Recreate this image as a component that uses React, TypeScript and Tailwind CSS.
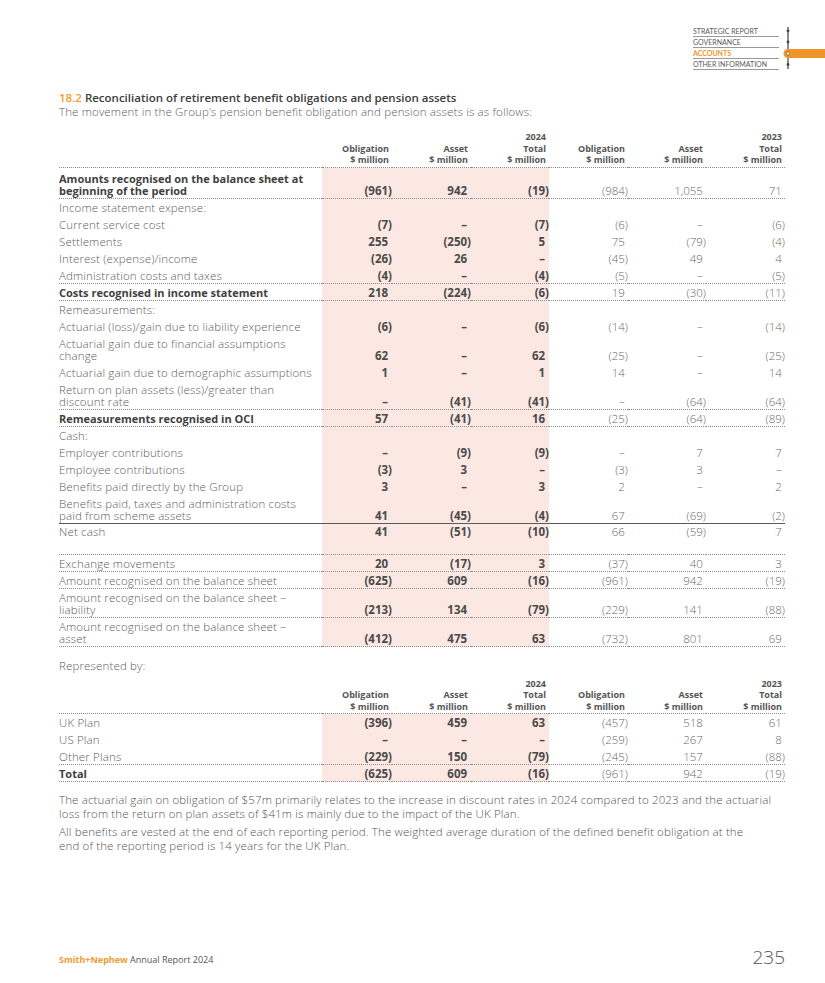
import React from "react";

const GRID = "grid grid-cols-[263px_70px_79px_78px_79px_78px_79px]";
const PINK = "bg-[#fce8e3]";

type Row = {
  label: string[];
  vals?: string[];
  bold?: boolean;
  border?: "dotted" | "solid";
  pt?: string;
  spacer?: string;
};

const table1: Row[] = [
  { label: ["Amounts recognised on the balance sheet at", "beginning of the period"], vals: ["(961)", "942", "(19)", "(984)", "1,055", "71"], bold: true, border: "dotted", pt: "pt-[5px]" },
  { label: ["Income statement expense:"] },
  { label: ["Current service cost"], vals: ["(7)", "–", "(7)", "(6)", "–", "(6)"] },
  { label: ["Settlements"], vals: ["255", "(250)", "5", "75", "(79)", "(4)"] },
  { label: ["Interest (expense)/income"], vals: ["(26)", "26", "–", "(45)", "49", "4"] },
  { label: ["Administration costs and taxes"], vals: ["(4)", "–", "(4)", "(5)", "–", "(5)"], border: "dotted" },
  { label: ["Costs recognised in income statement"], vals: ["218", "(224)", "(6)", "19", "(30)", "(11)"], bold: true, border: "dotted" },
  { label: ["Remeasurements:"] },
  { label: ["Actuarial (loss)/gain due to liability experience"], vals: ["(6)", "–", "(6)", "(14)", "–", "(14)"] },
  { label: ["Actuarial gain due to financial assumptions", "change"], vals: ["62", "–", "62", "(25)", "–", "(25)"] },
  { label: ["Actuarial gain due to demographic assumptions"], vals: ["1", "–", "1", "14", "–", "14"] },
  { label: ["Return on plan assets (less)/greater than", "discount rate"], vals: ["–", "(41)", "(41)", "–", "(64)", "(64)"], border: "dotted" },
  { label: ["Remeasurements recognised in OCI"], vals: ["57", "(41)", "16", "(25)", "(64)", "(89)"], bold: true, border: "dotted" },
  { label: ["Cash:"] },
  { label: ["Employer contributions"], vals: ["–", "(9)", "(9)", "–", "7", "7"] },
  { label: ["Employee contributions"], vals: ["(3)", "3", "–", "(3)", "3", "–"] },
  { label: ["Benefits paid directly by the Group"], vals: ["3", "–", "3", "2", "–", "2"] },
  { label: ["Benefits paid, taxes and administration costs", "paid from scheme assets"], vals: ["41", "(45)", "(4)", "67", "(69)", "(2)"], border: "solid" },
  { label: ["Net cash"], vals: ["41", "(51)", "(10)", "66", "(59)", "7"], pt: "pt-[2px]" },
  { label: [], spacer: "h-[15px]", border: "dotted" },
  { label: ["Exchange movements"], vals: ["20", "(17)", "3", "(37)", "40", "3"], border: "dotted" },
  { label: ["Amount recognised on the balance sheet"], vals: ["(625)", "609", "(16)", "(961)", "942", "(19)"], border: "dotted" },
  { label: ["Amount recognised on the balance sheet –", "liability"], vals: ["(213)", "134", "(79)", "(229)", "141", "(88)"], border: "dotted" },
  { label: ["Amount recognised on the balance sheet –", "asset"], vals: ["(412)", "475", "63", "(732)", "801", "69"], border: "dotted" },
];

const table2: Row[] = [
  { label: ["UK Plan"], vals: ["(396)", "459", "63", "(457)", "518", "61"], pt: "pt-[3px]" },
  { label: ["US Plan"], vals: ["–", "–", "–", "(259)", "267", "8"] },
  { label: ["Other Plans"], vals: ["(229)", "150", "(79)", "(245)", "157", "(88)"], border: "dotted" },
  { label: ["Total"], vals: ["(625)", "609", "(16)", "(961)", "942", "(19)"], bold: true, border: "dotted" },
];

function Num({ v }: { v: string }) {
  const paren = v.endsWith(")");
  return (
    <span className="whitespace-nowrap">
      {v}
      {!paren && <span className="invisible">)</span>}
    </span>
  );
}

function borderCls(b?: "dotted" | "solid") {
  if (b === "dotted") return "border-b border-dotted border-[#8c8c8c] pb-[1px]";
  if (b === "solid") return "border-b border-solid border-[#5a5a5a] pb-[1px]";
  return "pb-[2px]";
}

function TableRow({ row }: { row: Row }) {
  const b = borderCls(row.border);
  const pt = row.pt ?? "pt-[3px]";
  if (row.spacer) {
    return (
      <>
        <div className={`${row.spacer} border-b border-dotted border-[#8c8c8c]`} />
        {[0, 1, 2, 3, 4, 5].map((i) => (
          <div key={i} className={`${row.spacer} border-b border-dotted border-[#8c8c8c] ${i < 3 ? PINK : ""}`} />
        ))}
      </>
    );
  }
  const vals = row.vals ?? ["", "", "", "", "", ""];
  return (
    <>
      <div
        className={`${b} ${pt} flex flex-col justify-end ${
          row.bold ? "font-bold text-[11px] text-[#3f3f3f]" : "font-light text-[#5e5e5e] tracking-[0.15px]"
        }`}
      >
        <div className="whitespace-nowrap">
          {row.label.map((l, i) => (
            <React.Fragment key={i}>
              {i > 0 && <br />}
              {l}
            </React.Fragment>
          ))}
        </div>
      </div>
      {vals.map((v, i) => (
        <div
          key={i}
          className={`${b} ${pt} flex items-end justify-end ${
            i < 3 ? `${PINK} font-bold text-[#4a4a4a]` : "font-light text-[#6a6a6a]"
          }`}
        >
          {v && <Num v={v} />}
        </div>
      ))}
    </>
  );
}

function Header() {
  const cols = [
    ["", "Obligation", "$ million"],
    ["", "Asset", "$ million"],
    ["2024", "Total", "$ million"],
    ["", "Obligation", "$ million"],
    ["", "Asset", "$ million"],
    ["2023", "Total", "$ million"],
  ];
  return (
    <>
      <div className="border-b border-dotted border-[#8c8c8c]" />
      {cols.map((c, i) => (
        <div
          key={i}
          className="border-b border-dotted border-[#8c8c8c] pb-[1px] flex flex-col items-end text-[9px] leading-[11.5px] font-bold text-[#555] pr-[3px]"
        >
          <div className="h-[11.5px]">{c[0]}</div>
          <div>{c[1]}</div>
          <div>{c[2]}</div>
        </div>
      ))}
    </>
  );
}

function Nav() {
  const items = ["STRATEGIC REPORT", "GOVERNANCE", "ACCOUNTS", "OTHER INFORMATION"];
  return (
    <div className="flex justify-end pt-[26px]" style={{ fontFamily: "Lato, 'Liberation Sans', sans-serif" }}>
      <div className="flex flex-col w-[86px]">
        {items.map((it) => (
          <div
            key={it}
            className={`h-[11px] border-b border-[#9a9a9a] text-[7px] leading-[10px] whitespace-nowrap ${
              it === "ACCOUNTS" ? "text-[#f0952a] font-bold" : "text-[#5a5a5a]"
            }`}
          >
            {it}
          </div>
        ))}
      </div>
      <svg width="46" height="46" viewBox="0 0 46 46" className="-mt-[2px]">
        <line x1="9" y1="3" x2="9" y2="45" stroke="#444" strokeWidth="1.2" />
        <rect x="9" y="25" width="37" height="9" fill="#f0952a" />
        <circle cx="9" cy="29.5" r="4.5" fill="#f0952a" />
        <circle cx="9" cy="7" r="1.4" fill="#444" />
        <circle cx="9" cy="18" r="1.4" fill="#444" />
        <circle cx="9" cy="29.5" r="1.6" fill="#fff" stroke="#444" strokeWidth="0.6" />
        <circle cx="9" cy="40.5" r="1.4" fill="#444" />
      </svg>
    </div>
  );
}

export default function App() {
  return (
    <div
      className="w-[825px] h-[983px] bg-white flex flex-col"
      style={{ fontFamily: "'Open Sans', 'Liberation Sans', sans-serif" }}
    >
      <Nav />
      <div className="pl-[59px] pr-[40px] flex flex-col">
        <div className="mt-[21px] text-[11.5px] leading-[14px] font-semibold text-[#3c3c3c]">
          <span className="text-[#f29a2e]">18.2</span> Reconciliation of retirement benefit obligations and pension assets
        </div>
        <div className="text-[11.5px] leading-[14px] font-light text-[#5e5e5e] tracking-[0.15px]">
          The movement in the Group’s pension benefit obligation and pension assets is as follows:
        </div>

        <div className={`${GRID} mt-[12px] text-[11.5px] leading-[12px]`}>
          <Header />
          {table1.map((r, i) => (
            <TableRow key={i} row={r} />
          ))}
        </div>

        <div className="mt-[12px] text-[11.5px] leading-[14px] font-light text-[#5e5e5e] tracking-[0.15px]">Represented by:</div>

        <div className={`${GRID} mt-[5px] text-[11.5px] leading-[12px]`}>
          <Header />
          {table2.map((r, i) => (
            <TableRow key={i} row={r} />
          ))}
        </div>

        <div className="mt-[11px] text-[11.5px] leading-[13.5px] font-light text-[#555] tracking-[0.15px] flex flex-col gap-[5px]">
          <p className="whitespace-nowrap">
            The actuarial gain on obligation of $57m primarily relates to the increase in discount rates in 2024 compared to 2023 and the actuarial
            <br />
            loss from the return on plan assets of $41m is mainly due to the impact of the UK Plan.
          </p>
          <p className="whitespace-nowrap">
            All benefits are vested at the end of each reporting period. The weighted average duration of the defined benefit obligation at the
            <br />
            end of the reporting period is 14 years for the UK Plan.
          </p>
        </div>
      </div>

      <div className="mt-auto mb-[16px] pl-[59px] pr-[40px] flex items-end justify-between">
        <div className="text-[9px] leading-[10px] mb-[2px]">
          <span className="font-bold text-[#f29a2e]">Smith+Nephew</span>
          <span className="text-[#555]"> Annual Report 2024</span>
        </div>
        <div className="text-[19px] leading-[20px] font-light text-[#555]">235</div>
      </div>
    </div>
  );
}
